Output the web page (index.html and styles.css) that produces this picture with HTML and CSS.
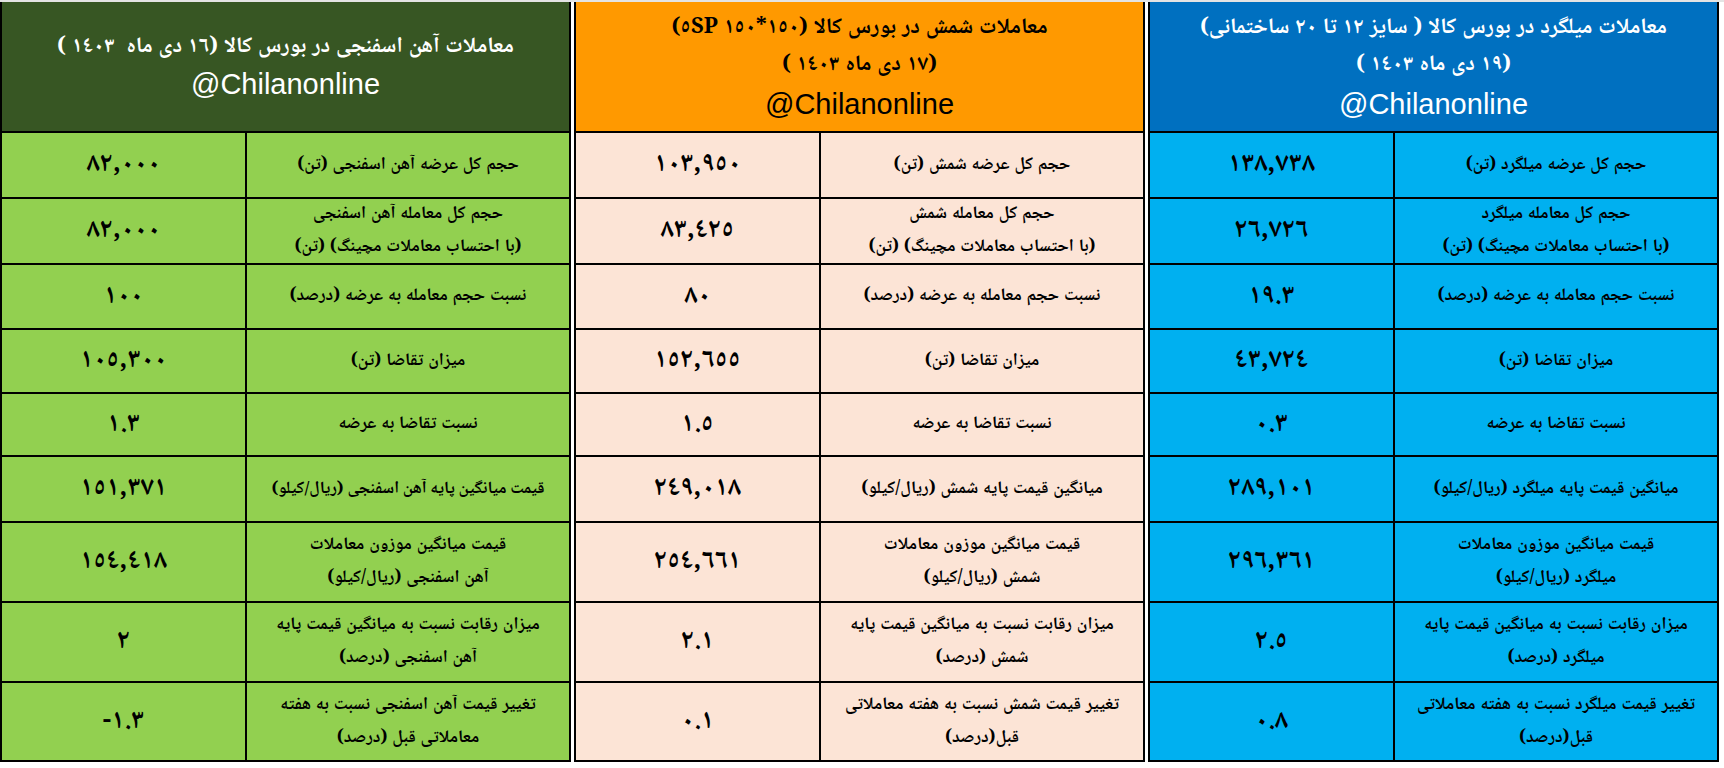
FILE: index.html
```html
<!DOCTYPE html>
<html lang="fa" dir="rtl">
<head>
<meta charset="utf-8">
<title>معاملات بورس کالا</title>
<link rel="stylesheet" href="styles.css">
</head>
<body>
<div class="page">
  <section class="sheet sheet-blue">
    <div class="head">
      <div class="head-fa">معاملات میلگرد در بورس کالا ( سایز ١٢ تا ٢٠ ساختمانی)</div>
      <div class="head-fa">(١٩ دی ماه ١٤٠٣ )</div>
      <div class="head-tag">@Chilanonline</div>
    </div>
    <div class="lab">حجم کل عرضه میلگرد (تن)</div><div class="val">١٣٨,٧٣٨</div>
    <div class="lab">حجم کل معامله میلگرد<br>(با احتساب معاملات مچینگ) (تن)</div><div class="val">٢٦,٧٢٦</div>
    <div class="lab">نسبت حجم معامله به عرضه (درصد)</div><div class="val">١٩.٣</div>
    <div class="lab">میزان تقاضا (تن)</div><div class="val">٤٣,٧٢٤</div>
    <div class="lab">نسبت تقاضا به عرضه</div><div class="val">٠.٣</div>
    <div class="lab">میانگین قیمت پایه میلگرد (ریال/کیلو)</div><div class="val">٢٨٩,١٠١</div>
    <div class="lab">قیمت میانگین موزون معاملات<br>میلگرد (ریال/کیلو)</div><div class="val">٢٩٦,٣٦١</div>
    <div class="lab">میزان رقابت نسبت به میانگین قیمت پایه<br>میلگرد (درصد)</div><div class="val">٢.٥</div>
    <div class="lab">تغییر قیمت میلگرد نسبت به هفته معاملاتی<br>قبل(درصد)</div><div class="val">٠.٨</div>
  </section>

  <section class="sheet sheet-orange">
    <div class="head">
      <div class="head-fa">معاملات شمش در بورس کالا (١٥٠*١٥٠ ٥SP)</div>
      <div class="head-fa">(١٧ دی ماه ١٤٠٣ )</div>
      <div class="head-tag">@Chilanonline</div>
    </div>
    <div class="lab">حجم کل عرضه شمش (تن)</div><div class="val">١٠٣,٩٥٠</div>
    <div class="lab">حجم کل معامله شمش<br>(با احتساب معاملات مچینگ) (تن)</div><div class="val">٨٣,٤٢٥</div>
    <div class="lab">نسبت حجم معامله به عرضه (درصد)</div><div class="val">٨٠</div>
    <div class="lab">میزان تقاضا (تن)</div><div class="val">١٥٢,٦٥٥</div>
    <div class="lab">نسبت تقاضا به عرضه</div><div class="val">١.٥</div>
    <div class="lab">میانگین قیمت پایه شمش (ریال/کیلو)</div><div class="val">٢٤٩,٠١٨</div>
    <div class="lab">قیمت میانگین موزون معاملات<br>شمش (ریال/کیلو)</div><div class="val">٢٥٤,٦٦١</div>
    <div class="lab">میزان رقابت نسبت به میانگین قیمت پایه<br>شمش (درصد)</div><div class="val">٢.١</div>
    <div class="lab">تغییر قیمت شمش نسبت به هفته معاملاتی<br>قبل(درصد)</div><div class="val">٠.١</div>
  </section>

  <section class="sheet sheet-green">
    <div class="head">
      <div class="head-fa">معاملات آهن اسفنجی در بورس کالا (١٦ دی ماه&nbsp; ١٤٠٣ )</div>
      <div class="head-tag">@Chilanonline</div>
    </div>
    <div class="lab">حجم کل عرضه آهن اسفنجی (تن)</div><div class="val">٨٢,٠٠٠</div>
    <div class="lab">حجم کل معامله آهن اسفنجی<br>(با احتساب معاملات مچینگ) (تن)</div><div class="val">٨٢,٠٠٠</div>
    <div class="lab">نسبت حجم معامله به عرضه (درصد)</div><div class="val">١٠٠</div>
    <div class="lab">میزان تقاضا (تن)</div><div class="val">١٠٥,٣٠٠</div>
    <div class="lab">نسبت تقاضا به عرضه</div><div class="val">١.٣</div>
    <div class="lab lab-tight">قیمت میانگین پایه آهن اسفنجی (ریال/کیلو)</div><div class="val">١٥١,٣٧١</div>
    <div class="lab">قیمت میانگین موزون معاملات<br>آهن اسفنجی (ریال/کیلو)</div><div class="val">١٥٤,٤١٨</div>
    <div class="lab">میزان رقابت نسبت به میانگین قیمت پایه<br>آهن اسفنجی (درصد)</div><div class="val">٢</div>
    <div class="lab">تغییر قیمت آهن اسفنجی نسبت به هفته<br>معاملاتی قبل (درصد)</div><div class="val">-١.٣</div>
  </section>
</div>
</body>
</html>
```

FILE: styles.css
```css
html, body {
  margin: 0;
  padding: 0;
  background: #ffffff;
}

body {
  font-family: "Noto Naskh Arabic", "Noto Sans Arabic", "DejaVu Sans", sans-serif;
  color: #000;
}

.page {
  display: flex;
  flex-direction: row;
  gap: 3px;
  padding: 0 5px 0 0;
  border-top: 2px solid #e4e4e4;
  height: 766px;
  box-sizing: border-box;
  align-items: flex-start;
}

.sheet {
  width: 571px;
  flex: 0 0 571px;
  box-sizing: border-box;
  display: grid;
  grid-template-columns: 322px 243px;
  grid-template-rows: 129px 64px 64px 63px 62px 61px 64px 78px 78px 77px;
  gap: 2px;
  background: #000;
  border: 2px solid #000;
  border-top: 0;
}

.head {
  grid-column: 1 / -1;
  display: flex;
  flex-direction: column;
  align-items: center;
  justify-content: center;
  gap: 5px;
  text-align: center;
}

.head-fa {
  font-weight: bold;
  font-size: 22px;
  line-height: 32px;
  white-space: nowrap;
  word-spacing: 1px;
}

.head-tag {
  font-family: "Liberation Sans", Arial, sans-serif;
  font-size: 29px;
  line-height: 36px;
  direction: ltr;
}

.sheet-green .head { gap: 3px; }

.lab {
  display: flex;
  align-items: center;
  justify-content: center;
  text-align: center;
  font-weight: bold;
  font-size: 17.5px;
  line-height: 33px;
  white-space: nowrap;
  word-spacing: 1px;
}

.lab-tight {
  word-spacing: 0;
  font-size: 17px;
}

.val {
  display: flex;
  align-items: center;
  justify-content: center;
  direction: ltr;
  font-weight: bold;
  font-size: 27px;
}

.sheet-green .head { background: #375623; color: #ffffff; }
.sheet-green .lab, .sheet-green .val { background: #92d050; }

.sheet-orange .head { background: #ff9900; color: #000000; }
.sheet-orange .lab, .sheet-orange .val { background: #fce4d6; }

.sheet-blue .head { background: #0070c0; color: #ffffff; }
.sheet-blue .lab, .sheet-blue .val { background: #00b0f0; }
```
